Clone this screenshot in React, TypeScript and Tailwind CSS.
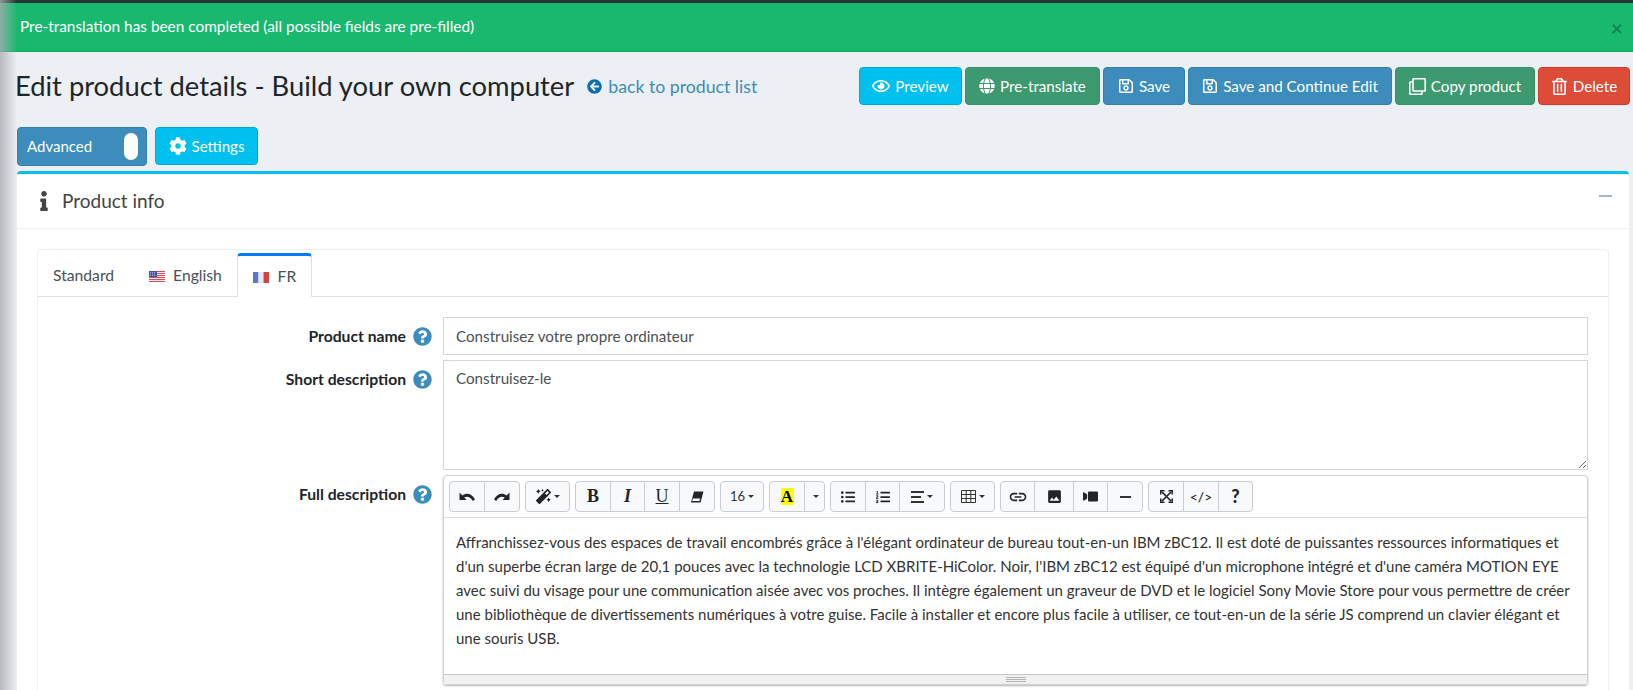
import type { ReactNode } from 'react';
import {
  FaArrowCircleLeft,
  FaCog,
  FaGlobe,
  FaInfo,
  FaListOl,
  FaListUl,
  FaMagic,
  FaQuestionCircle,
  FaRegClone,
  FaRegEye,
  FaRegSave,
  FaRegTrashAlt,
  FaVideo,
} from 'react-icons/fa';
import { MdImage, MdLink } from 'react-icons/md';

function HeaderButton({ icon, label, color, width }: { icon: ReactNode; label: string; color: string; width: string }) {
  return (
    <button className={`flex h-[38px] items-center justify-center gap-[5px] rounded border text-[15.2px] whitespace-nowrap text-white ${color} ${width}`}>
      {icon}
      {label}
    </button>
  );
}

function Caret() {
  return <span className="ml-[3px] inline-block border-x-[3px] border-t-[3px] border-x-transparent border-t-[#333]" />;
}

function ToolGroup({ children }: { children: ReactNode }) {
  return <div className="flex h-[31px] overflow-hidden rounded border border-[#c9ccd0] bg-[#f8f9fa] text-[#212529]">{children}</div>;
}

function Tool({ width, children }: { width: string; children: ReactNode }) {
  return <div className={`flex h-full items-center justify-center border-r border-[#c9ccd0] last:border-r-0 ${width}`}>{children}</div>;
}

function Label({ text, className }: { text: string; className: string }) {
  return (
    <div className={`flex w-[394px] shrink-0 justify-end ${className}`}>
      <span className="text-[15.7px] leading-[22px] font-bold text-[#212529]">{text}</span>
      <FaQuestionCircle className="mt-[2px] ml-[7px] shrink-0 text-[19px] text-[#3c8dbc]" />
    </div>
  );
}

function UsFlag() {
  return (
    <svg width="16" height="11" viewBox="0 0 16 11">
      <rect width="16" height="11" fill="#f4f4f8" />
      <path d="M0 .5h16M0 2.5h16M0 4.5h16M0 6.5h16M0 8.5h16M0 10.5h16" stroke="#e0494f" strokeWidth="1" />
      <rect width="8" height="6" fill="#3f55b5" />
      <path d="M1 1.5h6M1 3h6M1 4.5h6" stroke="#dfe3f5" strokeWidth=".6" strokeDasharray="1 1" />
    </svg>
  );
}

function FrFlag() {
  return (
    <svg width="16" height="11" viewBox="0 0 16 11">
      <rect width="5.5" height="11" fill="#5a78c8" />
      <rect x="5.5" width="5" height="11" fill="#e6e8f0" />
      <rect x="10.5" width="5.5" height="11" fill="#d8423e" />
    </svg>
  );
}

function UndoIcon({ flip }: { flip?: boolean }) {
  return (
    <svg width="16" height="11" viewBox="0 0 16 11" fill="#212529" className={flip ? '-scale-x-100' : ''}>
      <path d="M.5 1.5v7.5h7L5.2 6.6C7.6 4.9 11.2 5.4 13.8 10L16 8.4C13.2 2.8 7.6 1.3 3.4 4.4z" />
    </svg>
  );
}

function EraserIcon() {
  return (
    <svg width="14" height="12" viewBox="0 0 14 12">
      <path d="M4 .5h9.5L10.5 11.5H1z" fill="#212529" />
      <path d="M2.9 7.5h7.3L9.4 10H2.2z" fill="#f8f9fa" />
    </svg>
  );
}

function FullscreenIcon() {
  return (
    <svg width="13" height="13" viewBox="0 0 13 13" fill="none" stroke="#212529" strokeWidth="1.7">
      <path d="M2 2l9 9M11 2l-9 9" />
      <path d="M.7 4.5V.7h3.8M8.5.7h3.8v3.8M12.3 8.5v3.8H8.5M4.5 12.3H.7V8.5" />
    </svg>
  );
}

function TableIcon() {
  return (
    <svg width="15" height="13" viewBox="0 0 15 13" fill="none" stroke="#333" strokeWidth="1">
      <path d="M.5.5h14v12H.5zM.5 4.5h14M.5 8.5h14M5.2.5v12M9.8.5v12" />
    </svg>
  );
}

export default function App() {
  return (
    <div className="relative h-[690px] overflow-hidden bg-[#ecf0f5] font-['Lato','Liberation_Sans',sans-serif] text-[#212529]">
      <div className="h-[3px] bg-[#26352e]" />
      <div className="flex h-[49px] items-center justify-between border-b border-[#14a85c] bg-[#18b96f] pr-[10px] pl-5 text-[15.4px] text-white">
        <span>Pre-translation has been completed (all possible fields are pre-filled)</span>
        <span className="text-[21px] leading-none font-bold text-black/30">×</span>
      </div>

      <div className="flex items-center justify-between pt-[15px] pr-[3px] pl-[15px]">
        <div className="flex items-center">
          <h1 className="text-[27.35px] leading-[38px] text-[#212529]">Edit product details - Build your own computer</h1>
          <a className="mt-[2px] ml-[13px] flex items-center gap-[6px] text-[17.7px] text-[#3c8dbc]">
            <FaArrowCircleLeft className="text-[15px] text-[#0c6fb3]" />
            back to product list
          </a>
        </div>
        <div className="flex gap-[3px]">
          <HeaderButton icon={<FaRegEye className="text-[18px]" />} label="Preview" color="border-[#00acd6] bg-[#00c0ef]" width="w-[103px]" />
          <HeaderButton icon={<FaGlobe className="text-[16px]" />} label="Pre-translate" color="border-[#39916a] bg-[#3d9970]" width="w-[135px]" />
          <HeaderButton icon={<FaRegSave className="text-[16px]" />} label="Save" color="border-[#367fa9] bg-[#3c8dbc]" width="w-[82px]" />
          <HeaderButton icon={<FaRegSave className="text-[16px]" />} label="Save and Continue Edit" color="border-[#367fa9] bg-[#3c8dbc]" width="w-[204px]" />
          <HeaderButton icon={<FaRegClone className="text-[17px]" />} label="Copy product" color="border-[#39916a] bg-[#3d9970]" width="w-[140px]" />
          <HeaderButton icon={<FaRegTrashAlt className="text-[17px]" />} label="Delete" color="border-[#d73925] bg-[#dd4b39]" width="w-[92px]" />
        </div>
      </div>

      <div className="mt-[22px] flex gap-2 pl-[17px]">
        <div className="flex h-[39px] w-[130px] items-center justify-between rounded border border-[#367fa9] bg-[#3c8dbc] pr-[8px] pl-[9px] text-[15px] text-white">
          Advanced
          <span className="h-[27px] w-[14px] rounded-full bg-white" />
        </div>
        <div className="flex h-[38px] w-[103px] items-center justify-center gap-[5px] rounded border border-[#00acd6] bg-[#00c0ef] text-[15.1px] text-white">
          <FaCog className="text-[18px]" />
          Settings
        </div>
      </div>

      <div className="mt-[5px] mr-[4px] ml-[17px] rounded border-t-[3px] border-[#00c0ef] bg-white">
        <div className="flex h-[55px] items-center justify-between border-b border-[#eef0f2] pr-[17px] pl-[17px]">
          <div className="flex items-center text-[#444]">
            <FaInfo className="text-[20px]" />
            <span className="ml-[8px] text-[19px]">Product info</span>
          </div>
          <span className="mb-[11px] h-[2px] w-[13px] bg-[#adb5bd]" />
        </div>

        <div className="pt-5 pr-5 pl-5">
          <div className="h-[500px] rounded-t border border-[#eceef0]">
            <div className="flex h-[47px] items-end border-b border-[#dee2e6] text-[15.7px] text-[#495057]">
              <div className="flex h-[46px] items-center pt-[6px] pl-[15px]">Standard</div>
              <div className="ml-[35px] flex h-[46px] items-center gap-2 pt-[6px]">
                <UsFlag />
                English
              </div>
              <div className="relative top-px ml-[15px] flex h-[44px] w-[75px] items-center justify-center gap-[9px] rounded-t border-x border-t-[3px] border-x-[#dee2e6] border-t-[#007bff] bg-white pt-px">
                <FrFlag />
                FR
              </div>
            </div>

            <div className="pt-5">
              <div className="flex">
                <Label text="Product name" className="pt-2" />
                <input
                  readOnly
                  value="Construisez votre propre ordinateur"
                  className="ml-[11px] h-[38px] w-[1145px] border border-[#d2d6de] px-3 text-[15.2px] text-[#495057] outline-none"
                />
              </div>
              <div className="mt-[5px] flex">
                <Label text="Short description" className="pt-2" />
                <textarea
                  readOnly
                  value="Construisez-le"
                  className="ml-[11px] block h-[110px] w-[1145px] resize-y border border-[#d2d6de] px-3 py-[6px] text-[15.2px] text-[#495057] outline-none"
                />
              </div>
              <div className="mt-[5px] flex">
                <Label text="Full description" className="pt-[8px]" />
                <div className="ml-[11px] w-[1145px] rounded border border-[#cfd1d4] shadow-[0_1px_2px_rgba(0,0,0,0.3)]">
                  <div className="flex h-[42px] items-start gap-[5px] border-b border-[#dcdee0] pt-[5px] pl-[5px]">
                    <ToolGroup>
                      <Tool width="w-[35px]"><UndoIcon /></Tool>
                      <Tool width="w-[34px]"><UndoIcon flip /></Tool>
                    </ToolGroup>
                    <ToolGroup>
                      <Tool width="w-[43px]"><FaMagic className="text-[15px]" /><Caret /></Tool>
                    </ToolGroup>
                    <ToolGroup>
                      <Tool width="w-[35px]"><span className="font-['Liberation_Serif',serif] text-[18px] font-bold">B</span></Tool>
                      <Tool width="w-[34px]"><span className="font-['Liberation_Serif',serif] text-[18px] font-bold italic">I</span></Tool>
                      <Tool width="w-[35px]"><span className="font-['Liberation_Serif',serif] text-[18px] underline">U</span></Tool>
                      <Tool width="w-[34px]"><EraserIcon /></Tool>
                    </ToolGroup>
                    <ToolGroup>
                      <Tool width="w-[42px]"><span className="text-[13px] text-[#333]">16</span><Caret /></Tool>
                    </ToolGroup>
                    <ToolGroup>
                      <Tool width="w-[35px]"><span className="flex h-[17px] w-[13px] items-center justify-center bg-[#ffff00] font-['Liberation_Serif',serif] text-[17px] font-bold text-black">A</span></Tool>
                      <Tool width="w-[19px]"><Caret /></Tool>
                    </ToolGroup>
                    <ToolGroup>
                      <Tool width="w-[35px]"><FaListUl className="text-[14px]" /></Tool>
                      <Tool width="w-[34px]"><FaListOl className="text-[14px]" /></Tool>
                      <Tool width="w-[44px]">
                        <span className="flex w-[13px] flex-col gap-[3px]">
                          <span className="h-[2px] w-[13px] bg-[#333]" />
                          <span className="h-[2px] w-[10px] bg-[#333]" />
                          <span className="h-[2px] w-[13px] bg-[#333]" />
                        </span>
                        <Caret />
                      </Tool>
                    </ToolGroup>
                    <ToolGroup>
                      <Tool width="w-[43px]"><TableIcon /><Caret /></Tool>
                    </ToolGroup>
                    <ToolGroup>
                      <Tool width="w-[34px]"><MdLink className="text-[20px]" /></Tool>
                      <Tool width="w-[39px]"><MdImage className="text-[17px]" /></Tool>
                      <Tool width="w-[34px]"><FaVideo className="-scale-x-100 text-[15px]" /></Tool>
                      <Tool width="w-[34px]"><span className="h-[2px] w-[11px] bg-[#333]" /></Tool>
                    </ToolGroup>
                    <ToolGroup>
                      <Tool width="w-[35px]"><FullscreenIcon /></Tool>
                      <Tool width="w-[35px]"><span className="text-[14px] font-medium">{'</>'}</span></Tool>
                      <Tool width="w-[33px]"><span className="text-[18px] font-black">?</span></Tool>
                    </ToolGroup>
                  </div>
                  <div className="h-[156px] px-3 pt-3 text-[15px] leading-6 whitespace-nowrap text-[#333]">
                    Affranchissez-vous des espaces de travail encombrés grâce à l'élégant ordinateur de bureau tout-en-un IBM zBC12. Il est doté de puissantes ressources informatiques et
                    <br />
                    d'un superbe écran large de 20,1 pouces avec la technologie LCD XBRITE-HiColor. Noir, l'IBM zBC12 est équipé d'un microphone intégré et d'une caméra MOTION EYE
                    <br />
                    avec suivi du visage pour une communication aisée avec vos proches. Il intègre également un graveur de DVD et le logiciel Sony Movie Store pour vous permettre de créer
                    <br />
                    une bibliothèque de divertissements numériques à votre guise. Facile à installer et encore plus facile à utiliser, ce tout-en-un de la série JS comprend un clavier élégant et
                    <br />
                    une souris USB.
                  </div>
                  <div className="flex h-[10px] flex-col items-center justify-center gap-px border-t border-[#c8c8c8] bg-[#f1f1f1]">
                    <span className="h-px w-5 bg-[#b5b5b5]" />
                    <span className="h-px w-5 bg-[#b5b5b5]" />
                    <span className="h-px w-5 bg-[#b5b5b5]" />
                  </div>
                </div>
              </div>
            </div>
          </div>
        </div>
      </div>

      {/* sidebar shadow falling on the content */}
      <div className="pointer-events-none absolute inset-y-0 left-0 w-[17px] bg-gradient-to-r from-[#a9adb3]/80 to-transparent" />
    </div>
  );
}
